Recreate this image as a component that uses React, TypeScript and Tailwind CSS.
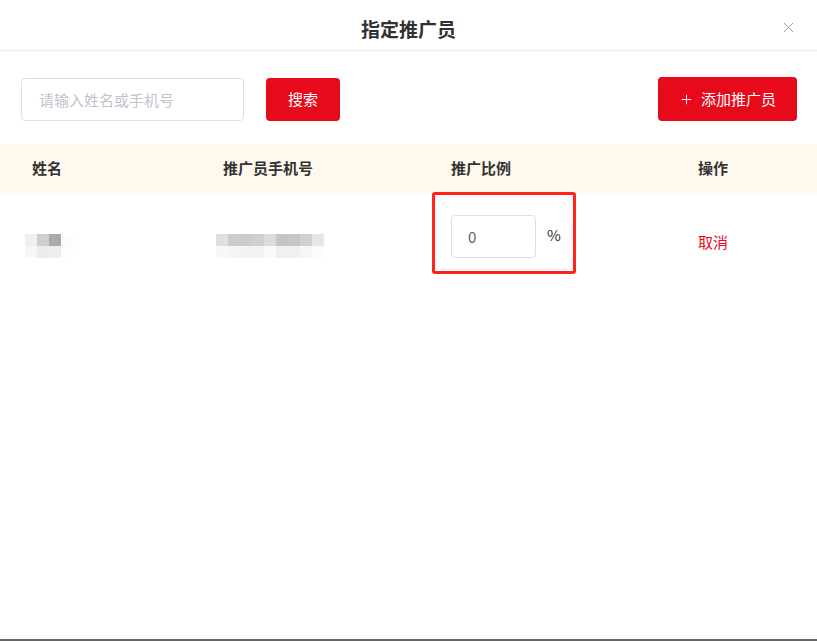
import { X, Plus } from "lucide-react";

const FONT = "font-['Noto_Sans_CJK_SC','Noto_Sans',sans-serif]";

// mosaic stand-ins for the blurred name / phone values
const NAME_BLOCKS = [
  ["#f0f0f0", "#cfcfcf", "#aaaaaa", "#fcfcfc"],
  ["#f7f7f7", "#ececec", "#eeeeee", "#fdfdfd"],
];
const PHONE_BLOCKS = [
  ["#e0e0e0", "#cccccc", "#cbcbcb", "#cfcfcf", "#dcdcdc", "#c4c4c4", "#c6c6c6", "#d0d0d0", "#e6e6e6"],
  ["#f8f8f8", "#f5f5f5", "#f3f3f3", "#f3f3f3", "#fafafa", "#f0f0f0", "#f1f1f1", "#f6f6f6", "#fbfbfb"],
];

function Mosaic({ rows }: { rows: string[][] }) {
  return (
    <div className="flex flex-col">
      {rows.map((row, i) => (
        <div key={i} className="flex">
          {row.map((c, j) => (
            <span key={j} className="block h-[12px] w-[12px]" style={{ background: c }} />
          ))}
        </div>
      ))}
    </div>
  );
}

export default function App() {
  return (
    <div className={`flex h-[641px] w-[817px] flex-col bg-white ${FONT}`}>
      <div className="flex flex-1 flex-col">
        {/* header */}
        <div className="relative flex h-[51px] items-center justify-center border-b border-[#ebebeb] pt-[9px]">
          <h1 className="text-[19px] font-bold text-[#303133]">指定推广员</h1>
          <button className="absolute right-[20px] top-[19px] text-[#8f8f8f]">
            <X size={17} strokeWidth={1.2} />
          </button>
        </div>

        {/* toolbar */}
        <div className="mt-[26px] flex items-center px-[20px] pl-[21px]">
          <input
            placeholder="请输入姓名或手机号"
            className="h-[43px] w-[223px] rounded-[4px] border border-[#dcdfe6] px-[17px] text-[15px] outline-none placeholder:text-[#c0c4cc]"
          />
          <button className="ml-[22px] h-[43px] w-[74px] rounded-[4px] bg-[#e60a1a] text-[15px] text-white">
            搜索
          </button>
          <button className="ml-auto flex h-[44px] w-[139px] items-center justify-center gap-[7px] rounded-[4px] bg-[#e60a1a] text-[15px] text-white">
            <Plus size={15} strokeWidth={1.5} />
            添加推广员
          </button>
        </div>

        {/* table */}
        <div className="mt-[23px]">
          <div className="grid h-[49px] grid-cols-[191px_228px_247px_1fr] items-center bg-[#fff8ee] text-[15px] font-bold text-[#333]">
            <div className="pl-8">姓名</div>
            <div className="pl-8">推广员手机号</div>
            <div className="pl-8">推广比例</div>
            <div className="pl-8">操作</div>
          </div>
          <div className="grid h-[98px] grid-cols-[191px_228px_247px_1fr] items-start">
            <div className="pl-[25px] pt-[41px]">
              <Mosaic rows={NAME_BLOCKS} />
            </div>
            <div className="pl-[25px] pt-[41px]">
              <Mosaic rows={PHONE_BLOCKS} />
            </div>
            <div className="pl-8 pt-[22px]">
              <div className="relative flex items-center gap-[11px]">
                <input
                  defaultValue="0"
                  className="h-[43px] w-[85px] rounded-[4px] border border-[#dcdfe6] px-[16px] text-[15px] text-[#606266] outline-none"
                />
                <span className="-mt-[2px] text-[15px] text-[#333]">%</span>
                <div className="pointer-events-none absolute left-[-19px] top-[-23px] h-[82px] w-[144px] rounded-[3px] border-[3px] border-[#ff2318]" />
              </div>
            </div>
            <div className="pl-8 pt-[38px] text-[15px] text-[#e60a1a]">取消</div>
          </div>
        </div>
      </div>
      <div className="h-[2px] bg-[#666]" />
    </div>
  );
}
